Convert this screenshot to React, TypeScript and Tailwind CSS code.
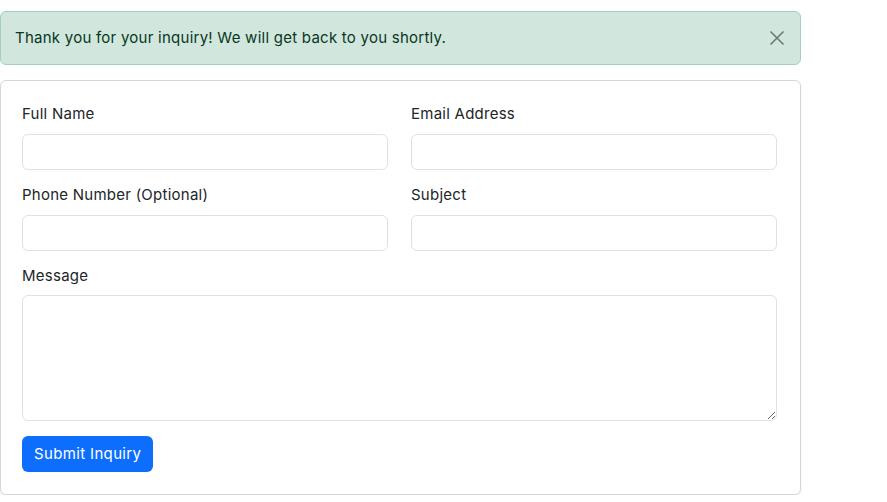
import React from "react";

const font = { fontFamily: "Inter, 'Open Sans', sans-serif" };

function Field({ label }: { label: string }) {
  return (
    <div className="flex flex-col">
      <label className="text-[15px] leading-[22px] tracking-[0.25px] text-[#212529] mb-[9px]">{label}</label>
      <input className="h-[36px] w-full rounded-[6px] border border-[#dee2e6] bg-white outline-none" />
    </div>
  );
}

export default function App() {
  return (
    <div className="w-[801px] pt-[11px] bg-white" style={font}>
      <div className="flex items-center justify-between h-[54px] rounded-[6px] border border-[#a3cfbb] bg-[#d1e7dd] pl-[14px] pr-[15px]">
        <span className="text-[15px] tracking-[0.25px] text-[#0a3622]">Thank you for your inquiry! We will get back to you shortly.</span>
        <svg width="16" height="16" viewBox="0 0 16 16" className="text-[#6c7a74]">
          <path d="M1.5 1.5 L14.5 14.5 M14.5 1.5 L1.5 14.5" stroke="currentColor" strokeWidth="1.6" fill="none" />
        </svg>
      </div>
      <div className="mt-[15px] rounded-[6px] border border-[#d6d6d6] shadow-[0_2px_3px_rgba(0,0,0,0.08)] pl-[21px] pr-[23px] pt-[22px] pb-[22px]">
        <div className="grid grid-cols-2 gap-x-[23px] gap-y-[14px]">
          <Field label="Full Name" />
          <Field label="Email Address" />
          <Field label="Phone Number (Optional)" />
          <Field label="Subject" />
        </div>
        <div className="mt-[14px] flex flex-col">
          <label className="text-[15px] leading-[22px] tracking-[0.25px] text-[#212529] mb-[8px]">Message</label>
          <textarea className="h-[126px] w-full rounded-[6px] border border-[#dee2e6] bg-white outline-none resize-y" />
        </div>
        <button className="mt-[15px] h-[36px] px-[12px] rounded-[6px] bg-[#0d6efd] text-white text-[15px] tracking-[0.35px]">Submit Inquiry</button>
      </div>
    </div>
  );
}
